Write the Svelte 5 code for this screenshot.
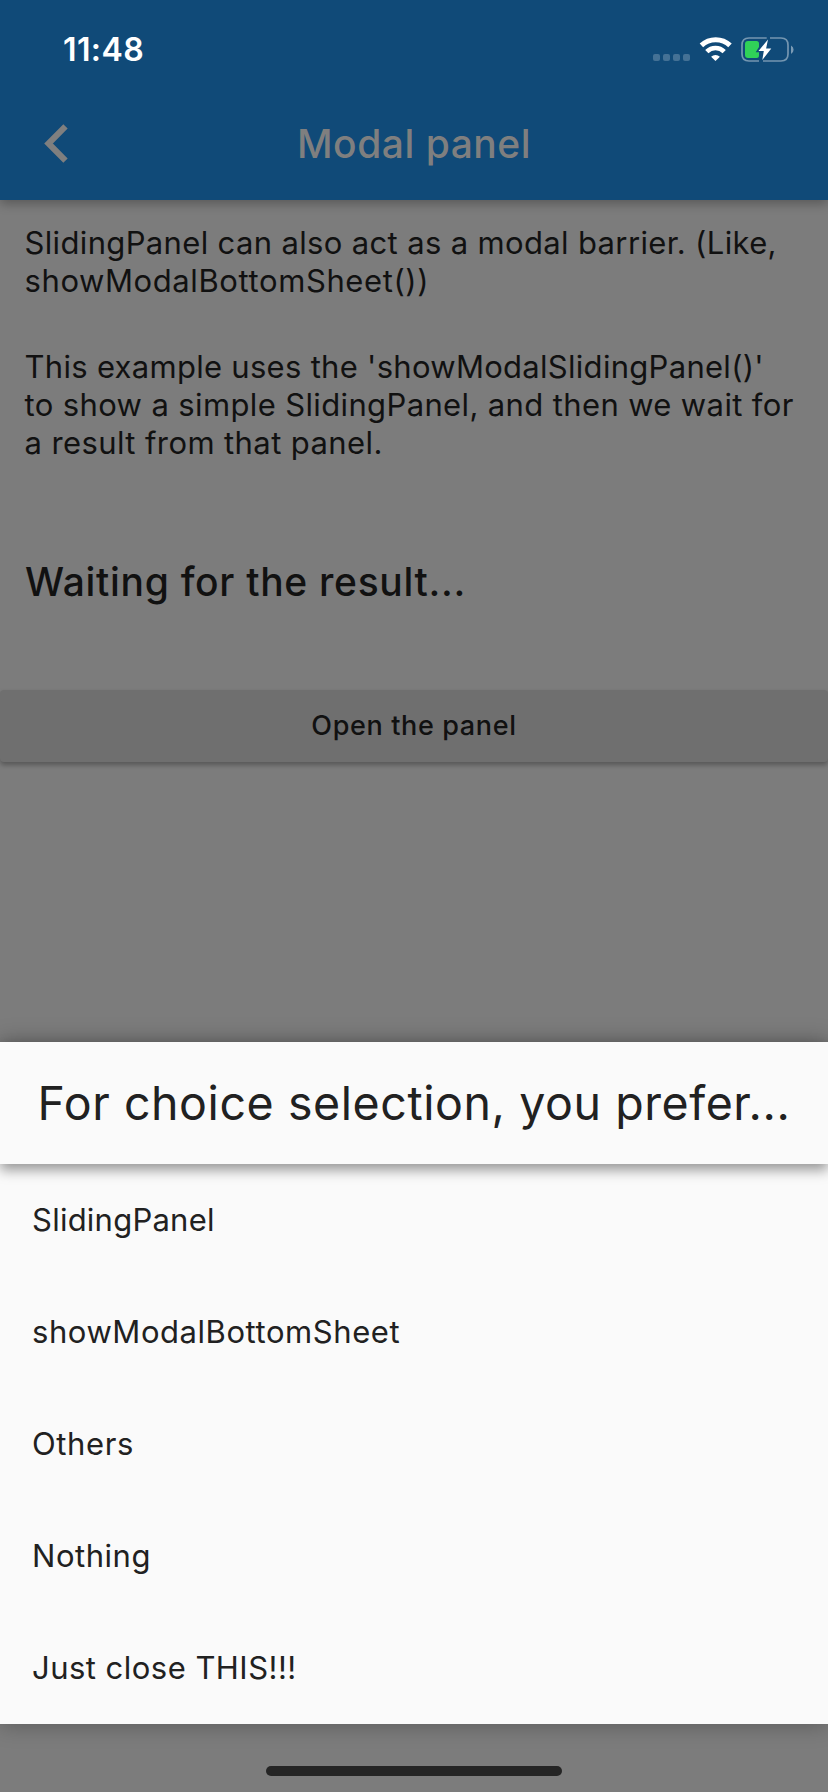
<script>
  const intro = [
    { text: 'SlidingPanel can also act as a modal barrier. (Like,', track: 0.35 },
    { text: 'showModalBottomSheet())', track: 0.6 }
  ];
  const usage = [
    { text: "This example uses the 'showModalSlidingPanel()'", track: 0.29 },
    { text: 'to show a simple SlidingPanel, and then we wait for', track: 0.37 },
    { text: 'a result from that panel.', track: 0.4 }
  ];
  const choices = [
    { text: 'SlidingPanel', track: 0.24 },
    { text: 'showModalBottomSheet', track: 0.56 },
    { text: 'Others', track: 0.6 },
    { text: 'Nothing', track: 0.53 },
    { text: 'Just close THIS!!!', track: 0.47 }
  ];
</script>

<div class="screen">
  <header class="top">
    <div class="status">
      <span class="time">11:48</span>
      <svg class="indicators" width="144" height="28" viewBox="0 0 144 28">
        <g fill="#fff" fill-opacity=".22">
          <rect x="1" y="18" width="7" height="7" rx="2" />
          <rect x="11" y="18" width="7" height="7" rx="2" />
          <rect x="21" y="18" width="7" height="7" rx="2" />
          <rect x="31" y="18" width="7" height="7" rx="2" />
        </g>
        <g fill="none" stroke="#fff">
          <path d="M49.4 9.400a20.6 20.6 0 0 1 28.6 0" stroke-width="5" />
          <path d="M54.800 15.600a12.4 12.4 0 0 1 17.400 0" stroke-width="4.6" />
        </g>
        <path d="M63.500 25l-4.400-4.300a6.4 6.4 0 0 1 8.800 0z" fill="#fff" />
        <g fill="none" stroke="#fff" stroke-opacity=".42" stroke-width="1.7">
          <path d="M114.700 2H97q-7 0-7 7v9q0 7 7 7h10" />
          <path d="M118 2H129q7 0 7 7v9q0 7-7 7h-18" />
        </g>
        <path d="M139 9.500a4.800 4.800 0 0 1 0 8.500z" fill="#fff" fill-opacity=".45" />
        <path d="M96 5h8.500q2.500 0 2.500 2.500v3.500l-3.300 5.200h3.300v3.300q0 2.500-2.500 2.500h-8.500q-3 0-3-3V8q0-3 3-3z" fill="#30d158" />
        <path d="M116 3.500l-9.500 11.400h5.300l-1.500 9.100 9-11.500h-5.200z" fill="#fff" />
      </svg>
    </div>
    <nav class="appbar">
      <svg class="back" width="26" height="42" viewBox="0 0 26 42">
        <path d="M22.500 3.300L5.500 20.500l17 17.200" fill="none" stroke="#7f7f7f" stroke-width="6.100" />
      </svg>
      <h1>Modal panel</h1>
    </nav>
  </header>

  <main>
    <p>{#each intro as line}<span style:letter-spacing="{line.track}px">{line.text}</span>{/each}</p>
    <p>{#each usage as line}<span style:letter-spacing="{line.track}px">{line.text}</span>{/each}</p>
    <h2>Waiting for the result...</h2>
  </main>
  <button class="open">Open the panel</button>

  <section class="sheet">
    <div class="title">For choice selection, you prefer...</div>
    <ul>
      {#each choices as choice}
        <li style:letter-spacing="{choice.track}px">{choice.text}</li>
      {/each}
    </ul>
  </section>
  <footer><div class="home"></div></footer>
</div>

<style>
  :global(body) { margin: 0; background: #7c7c7c; }
  .screen {
    width: 828px; height: 1792px; overflow: hidden; display: flex; flex-direction: column;
    background: #7c7c7c; color: #111; font-family: Inter, "Liberation Sans", sans-serif; font-weight: 400;
  }
  .top { height: 200px; background: #104a78; box-shadow: 0 4px 10px rgba(0,0,0,.28); flex: none; }
  .status { height: 88px; display: flex; justify-content: space-between; padding: 0 32px 0 62px; }
  .time { color: #fff; font-size: 32px; font-weight: 600; line-height: 38px; padding: 31px 0 0 1px; letter-spacing: .4px; }
  .indicators { margin-top: 36px; }
  .appbar { height: 112px; display: grid; grid-template-columns: 114px 1fr 114px; align-items: center; }
  .back { margin-left: 43px; }
  h1 { margin: 0; text-align: center; font-size: 39px; font-weight: 500; line-height: 48px; color: #7f7f7f; letter-spacing: .5px; }
  main { height: 490px; box-sizing: border-box; padding: 24px 24.500px 0; flex: none; }
  p { margin: 0 0 48px; font-size: 31px; line-height: 38px; white-space: nowrap; }
  p span { display: block; }
  h2 { margin: 96px 0 0 .5px; font-size: 39px; line-height: 48px; font-weight: 500; letter-spacing: .69px; }
  .open {
    height: 72px; flex: none; border: 0; border-radius: 4px; background: #6f6f6f; color: #111; padding: 0 0 2px;
    font: 500 27px Inter, sans-serif; letter-spacing: .64px; box-shadow: 0 3px 5px rgba(0,0,0,.3);
  }
  .sheet { margin-top: 280px; height: 682px; flex: none; background: #fafafa; color: #212121; box-shadow: 0 0 22px rgba(0,0,0,.3); }
  .title { height: 122px; box-sizing: border-box; padding: 33px 0 0 37.500px; font-size: 46.500px; line-height: 56px; letter-spacing: .58px; white-space: nowrap; box-shadow: 0 6px 12px rgba(0,0,0,.4); }
  ul { margin: 0; padding: 0; list-style: none; }
  li { height: 112px; box-sizing: border-box; display: flex; align-items: center; padding: 0 0 2px 32px; font-size: 31px; }
  footer { flex: 1; display: flex; justify-content: center; }
  .home { width: 296px; height: 10px; margin-top: 42px; border-radius: 5px; background: #252525; z-index: 1; }
</style>
